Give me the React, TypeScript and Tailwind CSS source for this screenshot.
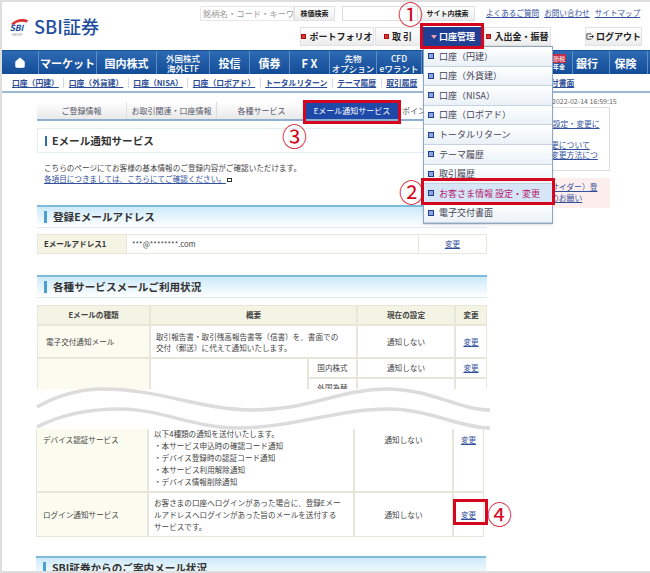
import React from "react";
import { Home } from "lucide-react";

const font = { fontFamily: '"Noto Sans CJK JP","Liberation Sans",sans-serif' };

function Bullet({ down = false }: { down?: boolean }) {
  return down ? (
    <span className="w-0 h-0 border-x-[3px] border-x-transparent border-t-[4px] border-t-[#f3a0b0] mr-[2px]" />
  ) : (
    <span className="inline-block w-[5px] h-[5px] bg-[#d33] border border-[#a11] mr-[3px] shrink-0" />
  );
}

function ToolButton({ children, className = "" }: { children: React.ReactNode; className?: string }) {
  return (
    <div className={`h-[19px] flex items-center justify-center whitespace-nowrap border border-[#e2e2e2] bg-gradient-to-b from-white to-[#ececec] text-[9px] font-bold text-[#222] ${className}`}>
      {children}
    </div>
  );
}

function NavItem({ a, b, w, children, className = "" }: { a?: string; b?: string; w: number; children?: React.ReactNode; className?: string }) {
  return (
    <div className={`flex flex-col items-center justify-center border-r border-[#5d8fc6] text-white font-bold shrink-0 leading-[10px] ${className}`} style={{ width: w }}>
      {children}
      {b ? (
        <>
          <span className="text-[8.5px] font-medium">{a}</span>
          <span className="text-[8.5px] font-medium">{b}</span>
        </>
      ) : (
        a && <span className="text-[11px]">{a}</span>
      )}
    </div>
  );
}

function MenuRow({ label, active = false }: { label: string; active?: boolean }) {
  return (
    <div className={`h-[19.6px] flex items-center pl-[4px] border-b border-[#c5d3e0] text-[9px] ${active ? "bg-[#d6e6f6] text-[#b3206e]" : "bg-gradient-to-b from-white to-[#eaf1f7] text-[#445]"}`}>
      <span className="w-[6px] h-[6px] bg-[#8fa6dc] border-[1.5px] border-[#1c3d8f] mr-[5px] shrink-0" />
      {label}
    </div>
  );
}

function SectionTitle({ children, className = "" }: { children: React.ReactNode; className?: string }) {
  return (
    <div className={`h-[23px] flex items-center border-t-2 border-t-[#7fbbdc] border-b border-b-[#dcebf2] bg-gradient-to-b from-[#cdeafa] to-white pl-[7px] ${className}`}>
      <span className="w-[3px] h-[12px] bg-[#4a9fd0] mr-[6px]" />
      <span className="text-[10.6px] font-bold text-[#333]">{children}</span>
    </div>
  );
}

const cell = "border border-[#e6e6da] text-[7.6px] text-[#444]";
const link = "text-[#33509c] underline";
const Sep = () => <span className="w-px h-[10px] bg-[#d5dbe4] shrink-0" />;

export default function App() {
  return (
    <div className="relative w-[650px] h-[573px] overflow-hidden bg-white border-l-2 border-t-2 border-[#dedede]" style={font}>
      {/* header */}
      <div className="h-[48px] flex">
        <div className="w-[198px] flex items-center pl-[7px] pt-[1px]">
          <svg width="20" height="24" viewBox="0 0 20 24">
            <path d="M2 9 Q9 2 19 5 L18 7.5 Q10 5 4 10Z" fill="#d9322e" />
            <text x="0.5" y="15.5" fontSize="8.5" fontStyle="italic" fontWeight="700" fill="#1b4f9c">SBI</text>
            <text x="3" y="21" fontSize="3" fill="#888">GROUP</text>
          </svg>
          <span className="ml-[5px] text-[18.2px] font-medium text-[#1f4f9e] leading-none">SBI証券</span>
        </div>
        <div className="flex-1">
          <div className="h-[22px] flex items-center">
            <div className="w-[94px] h-[15px] border border-[#e8e8e8] text-[8.3px] text-[#999] pl-[2px] leading-[13px] overflow-hidden whitespace-nowrap">銘柄名・コード・キーワ</div>
            <ToolButton className="w-[41px] !h-[15px] !text-[7px]">株価検索</ToolButton>
            <div className="w-[76px] h-[15px] border border-[#ddd] ml-[7px]" />
            <ToolButton className="w-[55px] !h-[15px] !text-[7px] ml-[2px]">サイト内検索</ToolButton>
            <span className={`${link} text-[7.6px] ml-[11px] whitespace-nowrap`}>よくあるご質問</span>
            <span className={`${link} text-[7.6px] ml-[5px] whitespace-nowrap`}>お問い合わせ</span>
            <span className={`${link} text-[7.6px] ml-[5px] whitespace-nowrap`}>サイトマップ</span>
          </div>
          <div className="flex items-center mt-[3px]">
            <ToolButton className="w-[74px] ml-[100px]"><Bullet />ポートフォリオ</ToolButton>
            <ToolButton className="w-[46px] ml-[1px]"><Bullet />取 引</ToolButton>
            <div className="w-[60px] h-[19px] ml-[2px] flex items-center justify-center bg-[#1f3f94] text-white text-[9px] font-bold"><Bullet down />口座管理</div>
            <ToolButton className="w-[67px] ml-[1px]"><Bullet />入出金・振替</ToolButton>
            <ToolButton className="w-[57px] ml-[34px]">
              <svg className="mr-[2px]" width="9" height="9" viewBox="0 0 9 9" fill="none" stroke="#333" strokeWidth="1">
                <path d="M6 1.5H1v6h5M3.5 4.5h5M6.5 2.5l2 2-2 2" />
              </svg>
              ログアウト
            </ToolButton>
          </div>
        </div>
      </div>

      {/* nav */}
      <div className="h-[24px] flex bg-gradient-to-b from-[#2e6ab4] to-[#134c97] border-t border-[#1a4e96]">
        <NavItem w={37}><Home size={12} fill="#fff" strokeWidth={1} /></NavItem>
        <NavItem a="マーケット" w={58} />
        <NavItem a="国内株式" w={60} />
        <NavItem a="外国株式" b="海外ETF" w={53} />
        <NavItem a="投信" w={40} />
        <NavItem a="債券" w={40} />
        <NavItem a="F X" w={40} />
        <NavItem a="先物" b="オプション" w={47} />
        <NavItem a="CFD" b="eワラント" w={45} />
        <div className="w-[151px] shrink-0 border-r border-[#5d8fc6] flex justify-end pr-[5px]">
          <div className="flex flex-col items-center justify-center text-white w-[16px]">
            <span className="bg-[#c32a48] text-[6px] leading-[9px] px-[1px]">節税</span>
            <span className="text-[6px] leading-[8px] font-bold">年金</span>
          </div>
        </div>
        <NavItem a="銀行" w={37} className="pr-[8px]" />
        <NavItem a="保険" w={38} className="pr-[6px]" />
      </div>

      {/* sub nav */}
      <div className="h-[19px] flex items-center pl-[10px] gap-[4.5px] border-b-2 border-[#9db8d2] whitespace-nowrap text-[7.8px] font-bold text-[#2b4c96] overflow-hidden">
        <span className="underline">口座（円建）</span><Sep />
        <span className="underline">口座（外貨建）</span><Sep />
        <span className="underline">口座（NISA）</span><Sep />
        <span className="underline">口座（ロボアド）</span><Sep />
        <span className="underline">トータルリターン</span><Sep />
        <span className="underline">テーマ履歴</span><Sep />
        <span className="underline">取引履歴</span>
        <span className="underline ml-[129px]">付書面</span>
      </div>

      {/* content */}
      <div className="ml-[35px] w-[450px]">
        <div className="mt-[9px] flex h-[19px] border-b-2 border-[#8db0d0] text-[8px] text-[#556]">
          <div className="w-[90px] flex items-center justify-center bg-gradient-to-b from-white to-[#e8e8e8] border-r border-[#ddd]">ご登録情報</div>
          <div className="w-[90px] flex items-center justify-center bg-gradient-to-b from-white to-[#e8e8e8] border-r border-[#ddd]">お取引関連・口座情報</div>
          <div className="w-[89px] flex items-center justify-center bg-gradient-to-b from-white to-[#e8e8e8]">各種サービス</div>
          <div className="w-[92px] flex items-center justify-center bg-[#1f49a8] text-white">Eメール通知サービス</div>
          <div className="pl-[4px] flex items-center whitespace-nowrap">ポイント</div>
        </div>
        <div className="mt-[7px] h-[25px] flex items-center border border-[#e3eef4] pl-[7px] w-[450px]">
          <span className="w-[2px] h-[10px] bg-[#2a6da8] mr-[5px]" />
          <span className="text-[10.6px] font-bold text-[#333]">Eメール通知サービス</span>
        </div>
        <p className="mt-[9px] ml-[7px] text-[7.6px] leading-[11px] text-[#444]">こちらのページにてお客様の基本情報のご登録内容がご確認いただけます。</p>
        <p className="ml-[7px] text-[7.6px] leading-[11px] text-[#33509c]"><span className="underline">各項目につきましては、こちらにてご確認ください。</span><span className="inline-block w-[5px] h-[4px] border border-[#333] ml-[1px]" /></p>

        <SectionTitle className="mt-[21px]">登録Eメールアドレス</SectionTitle>
        <div className="mt-[6px] flex h-[20px] items-stretch">
          <div className={`${cell} w-[90px] bg-[#f4f4e4] flex items-center pl-[6px] font-bold !text-[#333]`}>Eメールアドレス1</div>
          <div className={`${cell} w-[292px] flex items-center pl-[5px] border-l-0`}>***@********.com</div>
          <div className={`${cell} w-[68px] flex items-center justify-center border-l-0`}><span className={link}>変更</span></div>
        </div>

        <SectionTitle className="mt-[21px]">各種サービスメールご利用状況</SectionTitle>
        <div className="mt-[7px] grid grid-cols-[113px_158px_49px_98px_32px] grid-rows-[20px_33px_20px_20px]">
          <div className={`${cell} bg-[#f4f4e4] flex items-center justify-center font-bold`}>Eメールの種類</div>
          <div className={`${cell} col-span-2 bg-[#f4f4e4] flex items-center justify-center font-bold`}>概要</div>
          <div className={`${cell} bg-[#f4f4e4] flex items-center justify-center font-bold`}>現在の設定</div>
          <div className={`${cell} bg-[#f4f4e4] flex items-center justify-center font-bold`}>変更</div>

          <div className={`${cell} bg-[#fbfbf0] flex items-center pl-[8px]`}>電子交付通知メール</div>
          <div className={`${cell} col-span-2 flex items-center pl-[5px] leading-[11px] whitespace-nowrap`}><span>取引報告書・取引残高報告書等（信書）を、書面での<br />交付（郵送）に代えて通知いたします。</span></div>
          <div className={`${cell} flex items-center justify-center`}>通知しない</div>
          <div className={`${cell} flex items-center justify-center`}><span className={link}>変更</span></div>

          <div className={`${cell} bg-[#fbfbf0] row-span-2`} />
          <div className={`${cell} row-span-2`} />
          <div className={`${cell} flex items-center justify-center`}>国内株式</div>
          <div className={`${cell} flex items-center justify-center`}>通知しない</div>
          <div className={`${cell} flex items-center justify-center`}><span className={link}>変更</span></div>

          <div className={`${cell} flex items-center justify-center`}>外国為替</div>
          <div className={cell} />
          <div className={cell} />
        </div>

        {/* gap covered by the torn-paper wave */}
        <div className="h-[27px]" />

        <div className="grid grid-cols-[112px_206px_99px_31px] grid-rows-[67px_45px] leading-[12px] -translate-x-[1px]">
          <div className={`${cell} bg-[#fbfbf0] pl-[6px] pt-[9px] border-t-0`}>デバイス認証サービス</div>
          <div className={`${cell} pl-[5px] pt-[3px] border-t-0 whitespace-nowrap`}>
            以下4種類の通知を送付いたします。<br />
            ・本サービス申込時の確認コード通知<br />
            ・デバイス登録時の認証コード通知<br />
            ・本サービス利用解除通知<br />
            ・デバイス情報削除通知
          </div>
          <div className={`${cell} flex justify-center pt-[9px] border-t-0`}>通知しない</div>
          <div className={`${cell} flex justify-center pt-[9px] border-t-0`}><span className={link}>変更</span></div>

          <div className={`${cell} bg-[#fbfbf0] flex items-center pl-[6px]`}>ログイン通知サービス</div>
          <div className={`${cell} flex items-center pl-[5px] whitespace-nowrap`}><span>お客さまの口座へログインがあった場合に、登録Eメー<br />ルアドレスへログインがあった旨のメールを送付する<br />サービスです。</span></div>
          <div className={`${cell} flex items-center justify-center`}>通知しない</div>
          <div className={`${cell} flex items-center justify-center`}><span className={link}>変更</span></div>
        </div>

        <SectionTitle className="mt-[19px] -translate-x-[1px]">SBI証券からのご案内メール状況</SectionTitle>
      </div>

      {/* right side notice panel */}
      <div className="absolute left-[550px] top-[94px] text-[7px] leading-[10px] text-[#666] whitespace-nowrap">2022-02-14 16:59:15</div>
      <div className="absolute left-[549px] top-[105px] w-[59px] h-[64px] border border-l-0 border-[#ddd] text-[7.8px] leading-[10px] text-[#33509c] pt-[11px] whitespace-nowrap overflow-hidden">
        <div className="underline">&nbsp;設定・変更に</div>
        <div className="underline mt-[11px]">更について</div>
        <div className="underline">変更方法につ</div>
      </div>
      <div className="absolute left-[549px] top-[176px] w-[59px] h-[30px] bg-[#fdeeee] text-[7.8px] leading-[11px] text-[#33509c] pt-[3px] whitespace-nowrap overflow-hidden">
        <div className="underline">サイダー）登</div>
        <div className="underline">のお願い</div>
      </div>

      {/* dropdown */}
      <div className="absolute left-[421px] top-[44px] w-[130px] border border-[#8ea6bf] bg-white shadow-sm">
        {["口座（円建）", "口座（外貨建）", "口座（NISA）", "口座（ロボアド）", "トータルリターン", "テーマ履歴", "取引履歴"].map((l) => (
          <MenuRow key={l} label={l} />
        ))}
        <MenuRow label="お客さま情報 設定・変更" active />
        <MenuRow label="電子交付書面" />
      </div>

      {/* wave tear */}
      <svg className="absolute left-[-2px] top-[378px]" width="650" height="60" viewBox="0 0 650 60">
        <rect x="30" y="9" width="470" height="40" fill="#fff" />
        <path d="M37 27 C60 14 80 9 103 9 C160 9 200 30 253 30 C310 30 340 9 387 9 C430 9 460 30 490 30" fill="none" stroke="#dcdcdc" strokeWidth="3.5" />
        <path d="M37 47 C60 35 90 29 120 29 C160 29 195 48 237 48 C290 48 340 29 387 29 C430 29 460 48 490 48" fill="none" stroke="#dcdcdc" strokeWidth="3.5" />
      </svg>

      {/* annotation highlights */}
      <div className="absolute left-[418px] top-[21px] w-[64px] h-[26px] border-[3px] border-[#d4071e]" />
      <div className="absolute left-[301px] top-[98px] w-[98px] h-[24px] border-[3px] border-[#d4071e]" />
      <div className="absolute left-[419px] top-[176px] w-[134px] h-[27px] border-[3px] border-[#d4071e]" />
      <div className="absolute left-[451px] top-[497px] w-[35px] h-[26px] border-[3px] border-[#d4071e]" />
      <span className="absolute left-[396px] top-[-3px] text-[25px] leading-[28px] text-[#d4071e]">①</span>
      <span className="absolute left-[397px] top-[175px] text-[25px] leading-[28px] text-[#d4071e]">②</span>
      <span className="absolute left-[280px] top-[119px] text-[25px] leading-[28px] text-[#d4071e]">③</span>
      <span className="absolute left-[485px] top-[497px] text-[25px] leading-[28px] text-[#d4071e]">④</span>
      <div className="absolute left-0 bottom-0 w-full h-[2px] bg-[#dedede]" />
    </div>
  );
}
